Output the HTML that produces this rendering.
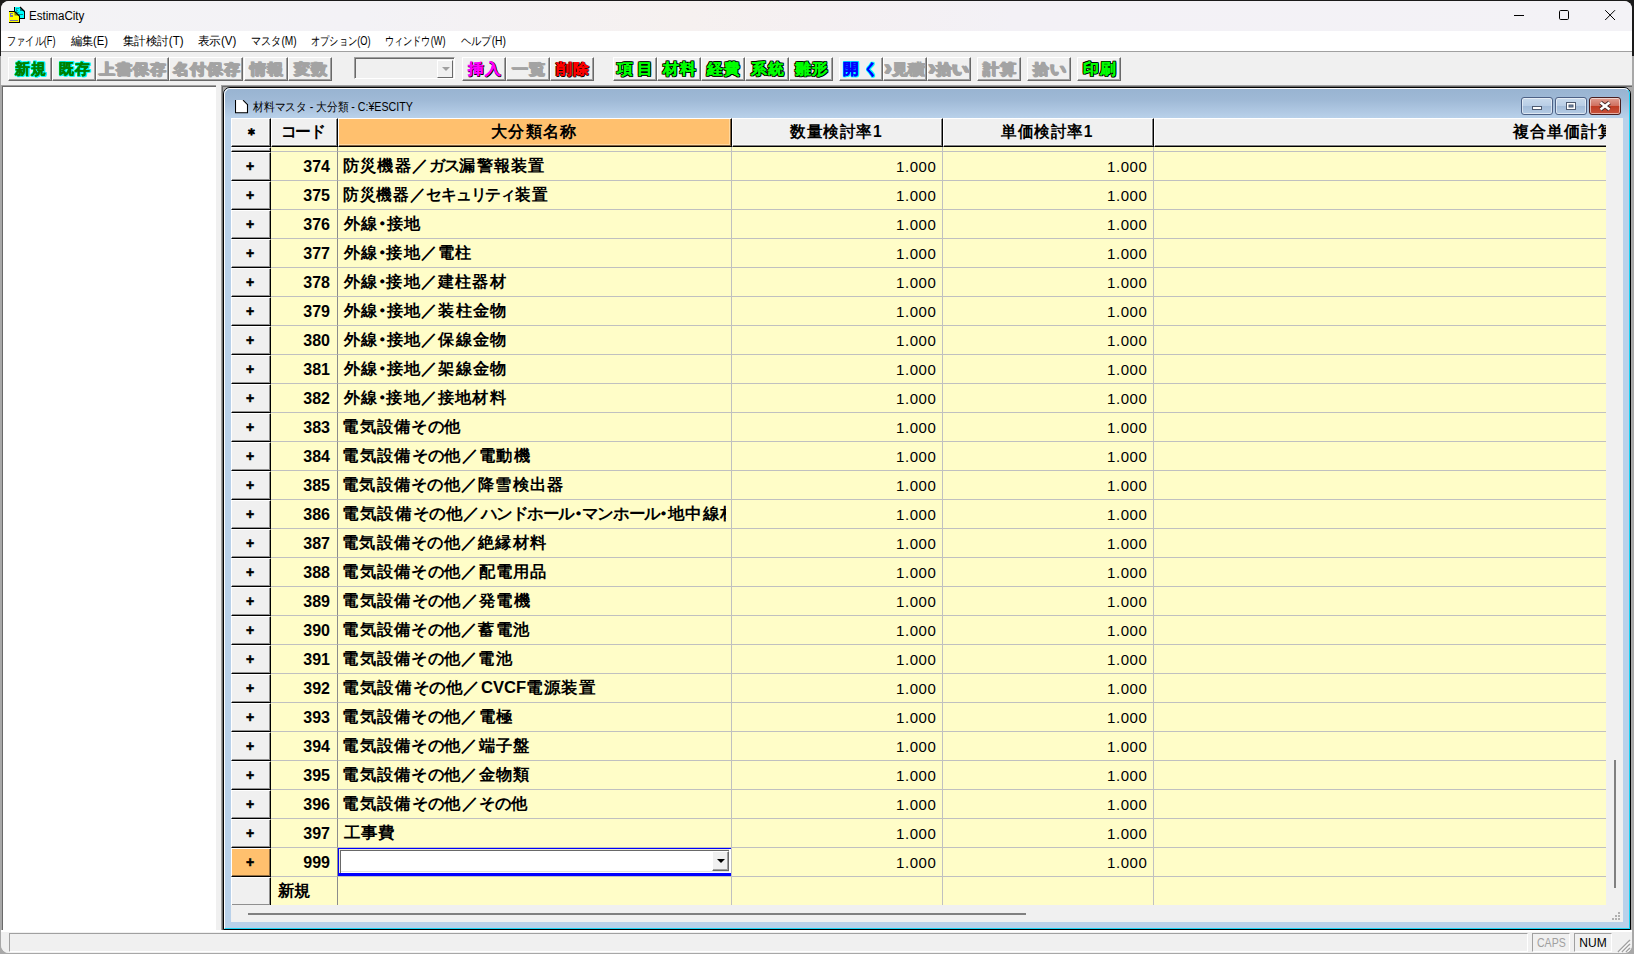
<!DOCTYPE html>
<html lang="ja">
<head>
<meta charset="utf-8">
<title>EstimaCity</title>
<style>
*{box-sizing:border-box;margin:0;padding:0}
html,body{width:1634px;height:954px;overflow:hidden}
body{position:relative;background:#a8a8a8;font-family:"Liberation Sans",sans-serif;color:#000}
.abs{position:absolute}
#edgeT{left:0;top:0;width:1634px;height:56px;background:#1a1a1a}
#win{left:1px;top:1px;width:1631px;height:952px;background:#f0f0f0;border-radius:8px;overflow:hidden}
#titlebar{left:0;top:0;width:1631px;height:30px;background:linear-gradient(90deg,#f3f3f5 0,#f3f2f6 22%,#f6f1f0 42%,#f5f0f2 50%,#f3f1f6 62%,#f3f2f6 100%)}
#apptitle{left:29px;top:7px;font-size:12px;line-height:16px;white-space:nowrap}
#menubar{left:0;top:30px;width:1631px;height:20px;background:#fff;font-size:12px;line-height:20px}
#menubar span{position:absolute;top:0;white-space:nowrap}
#tbline{left:0;top:50px;width:1631px;height:1px;background:#a0a0a0}
#toolbar{left:0;top:51px;width:1631px;height:33px;background:#f0f0f0}
.tb{position:absolute;top:5px;height:24px;width:44px;border:1px solid;border-color:#fff #696969 #696969 #fff;background:#f0f0f0;font-size:17px;line-height:22px;font-weight:bold;text-align:center;white-space:nowrap;overflow:hidden;box-shadow:inset -1px -1px 0 #a0a0a0}
.tb b{display:inline-block;font-weight:bold;font-size:15px;letter-spacing:1px;margin-right:-1px;transform:scaleX(1.05);transform-origin:50% 50%;position:relative;top:0}
.tb.w{width:74px}
.g1 b{transform:scaleX(1);color:#008000;-webkit-text-stroke:.4px #008000;text-shadow:-1px -1px 0 #00ffff,-1px 0px 0 #00ffff,-1px 1px 0 #00ffff,0px -1px 0 #00ffff,0px 1px 0 #00ffff,1px -1px 0 #00ffff,1px 0px 0 #00ffff,1px 1px 0 #00ffff}
.dis b{color:#a3a3a3;text-shadow:1px 0 0 #a3a3a3,0 1px 0 #a3a3a3,1px 1px 0 #a3a3a3,-1px 0 0 #a3a3a3}
.mg b{color:#ff00ff;-webkit-text-stroke:.3px #ff00ff;text-shadow:1px 1px 0 #000,1px 0 0 #000,0 1px 0 #000}
.rd b{color:#ff0000;-webkit-text-stroke:.3px #ff0000;text-shadow:1px 1px 0 #000,1px 0 0 #000,0 1px 0 #000,-1px 0 0 #000}
.gr b{color:#00ff00;-webkit-text-stroke:.3px #00ff00;text-shadow:-1px -1px 0 #000,-1px 0px 0 #000,-1px 1px 0 #000,0px -1px 0 #000,0px 1px 0 #000,1px -1px 0 #000,1px 0px 0 #000,1px 1px 0 #000}
.bl b{transform:scaleX(1.04);color:#0000ff;-webkit-text-stroke:.4px #0000ff;text-shadow:-1px -1px 0 #00ffff,-1px 0px 0 #00ffff,-1px 1px 0 #00ffff,0px -1px 0 #00ffff,0px 1px 0 #00ffff,1px -1px 0 #00ffff,1px 0px 0 #00ffff,1px 1px 0 #00ffff}
#tcombo{left:353px;top:5px;width:101px;height:22px;border:1px solid;border-color:#a0a0a0 #fff #fff #a0a0a0;background:#f0f0f0;box-shadow:inset 1px 1px 0 #696969}
#tcombo .dd{position:absolute;right:1px;top:2px;width:16px;height:18px;border:1px solid;border-color:#fff #696969 #696969 #fff;background:#f0f0f0}
#tcombo .dd i{position:absolute;left:4px;top:6px;border:4px solid transparent;border-top:4px solid #a0a0a0;border-bottom:none}
#leftpane{box-shadow:-1px 0 0 #a8a8a8;left:1px;top:84px;width:214px;height:845px;background:#fff;border-left:1px solid #696969;border-top:2px solid #696969}
#leftpane:before{content:"";position:absolute;left:-1px;top:-2px;width:214px;height:1px;background:#a0a0a0}
#mdi{left:220px;top:84px;width:1411px;height:845px;border-left:2px solid #696969;border-top:2px solid #696969;background:#ababab}
#mdi:before{content:"";position:absolute;left:-2px;top:-2px;width:1411px;height:1px;background:#a0a0a0}
#mdi:after{content:"";position:absolute;left:-2px;top:-2px;width:1px;height:845px;background:#a0a0a0}
#child{left:222px;top:86px;width:1408px;height:843px;border:1px solid #000;border-radius:7px 7px 0 0;background:#b9d1ea;overflow:hidden}
#child .hl{left:0;top:0;width:1406px;height:841px;border:1px solid;border-color:#fff #19d3f5 #19d3f5 #fff;border-radius:6px 6px 0 0}
#ctitle{left:0;top:0;width:1406px;height:30px;background:linear-gradient(#98b3d1,#9fb9d6 40%,#b9d1ea);border-radius:5px 5px 0 0}
#ctext{left:30px;top:11px;font-size:12px;line-height:16px;white-space:nowrap}
.cb{position:absolute;top:9px;width:32px;height:18px;border:1px solid #4d6185;border-radius:3px;background:linear-gradient(#c9daec,#b9cee6 48%,#a3bcd9 52%,#b4cbe4);box-shadow:inset 0 0 0 1px rgba(255,255,255,.55)}
.cb.x{border-color:#4a1d1d;background:linear-gradient(#e0a093,#d0705f 48%,#bf3b22 52%,#c8533d)}
#client{left:7px;top:30px;width:1392px;height:804px;background:#f0f0f0}
#grid{letter-spacing:1px;position:absolute;left:231px;top:118px;width:1375px;height:787px;background:#fffdc8;overflow:hidden;font-size:16px;font-weight:bold}
.h{position:absolute;top:0;height:29px;background:#f0f0f0;border-top:1px solid #fff;border-left:1px solid #fff;border-right:1px solid #000;border-bottom:1px solid #000;text-align:center;line-height:25px;white-space:nowrap;overflow:hidden;box-shadow:inset -1px -1px 0 #808080,inset -2px -2px 0 #f8f8f8}
.h.or{background:#ffc06e;box-shadow:inset -1px -1px 0 #80603a,inset -2px -2px 0 #ffd9a0}
.row{position:absolute;left:0;width:1375px;height:29px}
.rh{position:absolute;left:0;top:0;width:40px;height:29px;background:#f0f0f0;border-top:1px solid #fff;border-left:1px solid #fff;border-right:1px solid #000;border-bottom:1px solid #000;text-align:center;line-height:25px;box-shadow:inset -1px -1px 0 #909090}
.rh.sel{background:#ffc06e;box-shadow:inset -1px -1px 0 #906c40}
.rh span{-webkit-text-stroke:.5px #000;font-size:14px;position:relative;top:0;left:-0.500px}
.c{position:absolute;top:0;height:29px;border-right:1px solid #c0c0c0;border-bottom:1px solid #c0c0c0;line-height:28px;white-space:nowrap;overflow:hidden}
.code{border-right-color:#8c8c8c;left:40px;width:67px;text-align:right;padding-right:7px}
.newc{text-align:left;padding-left:6px;padding-right:0}
.name{left:107px;width:394px;padding-left:6px}
.qty{left:501px;width:211px;text-align:right;padding-right:5.500px;font-weight:normal}
.prc{left:712px;width:211px;text-align:right;padding-right:5.500px;font-weight:normal}
.last{left:923px;width:460px}
.edit{padding:0}
.ed{position:absolute;left:0;top:0;width:393px;height:28px;background:#fff;border-left:1px solid #0000ff;border-top:1px solid #0000ff;border-bottom:3px solid #0000ff}
.combo{position:absolute;left:0;top:0;width:390px;height:24px;background:#fff;box-shadow:inset 1px 1px 0 #ecead0,inset 2px 2px 0 #696969,inset 0 -1px 0 #fff,inset 0 -2px 0 #e3e3e3}
.combo .dd{position:absolute;left:373px;top:2px;width:17px;height:20px;border:1px solid;border-color:#fff #696969 #696969 #fff;background:#f0f0f0;box-shadow:inset -1px -1px 0 #a0a0a0}
.combo .dd i{position:absolute;left:4px;top:7px;width:0;height:0;border:4px solid transparent;border-top:4px solid #000;border-bottom:none}
#hsb{left:248px;top:913px;width:778px;height:2px;background:#808080}
#vsb{left:1614px;top:760px;width:2px;height:128px;background:#808080}
#status{left:1px;top:930px;width:1631px;height:23px;background:#f0f0f0;border-top:2px solid #fff;border-radius:0 0 8px 8px}
.sp{position:absolute;top:933px;height:19px;border:1px solid;border-color:#a0a0a0 #fff #fff #a0a0a0;font-size:12px;line-height:19px;text-align:center}
.t{display:inline-block;transform-origin:0 50%;white-space:nowrap}
.k{letter-spacing:-1px}
.hk{letter-spacing:0}
.la{letter-spacing:0}
.d{margin:0 -4px;letter-spacing:0}
.qty,.prc{letter-spacing:.6px;line-height:29px;font-size:15px}
.code{letter-spacing:0;line-height:30px;font-size:16px}
.newc{line-height:28px}
#menubar span{transform-origin:0 50%;display:inline-block}
#ctext{transform-origin:0 50%}
.clip{width:384px;height:28px;overflow:hidden;margin-left:-2px;padding-left:2px}
.d{-webkit-text-stroke:1px #000}
.ar{font-size:22px;line-height:0;margin:0 -1px 0 -2px;position:relative;top:1px}
</style>
</head>
<body>
<div class="abs" id="edgeT"></div>
<div class="abs" id="win">
<div class="abs" id="titlebar">
<svg class="abs" style="left:7px;top:5px" width="18" height="18" viewBox="8 6 18 18" shape-rendering="crispEdges"><path d="M15 7h5l4 4v7h-9z" fill="#00ffff"/><path d="M14 7h1v5h-1zM24 11h1v8h-1zM19 18h5v1h-5z" fill="#000"/><path d="M20 8v3h4z" fill="#008080" shape-rendering="auto"/><path d="M20 7l4.500 4.500" stroke="#000" stroke-width="1.300" shape-rendering="auto"/><path d="M16 8h3v1h-2v1h1v1h-1v1h2v1h-3z" fill="#109090" opacity=".8"/><path d="M19 14h4v1h-4z" fill="#108080"/><path d="M9 12h6l4 4v6h-10z" fill="#ffff00"/><path d="M9 11h6v1h-6zM19 16h1v7h-1zM9 22h10v1h-10z" fill="#000"/><path d="M14.500 12.500v3h4z" fill="#808000" shape-rendering="auto"/><path d="M14.500 11.500l5 4.500" stroke="#000" stroke-width="1.300" shape-rendering="auto"/><path d="M10 13h3v1h-2v1h2v1h-2v0h-1zM10 16h3v1h-3zM10 20h8v1h-8z" fill="#7474a4"/></svg>
<div class="abs" id="apptitle" style="transform:translateX(-2.00px) scaleX(0.9659)">EstimaCity</div>
<svg class="abs" style="left:1506px;top:4px" width="120" height="20" viewBox="0 0 120 20"><path d="M7 10.500h10M53.700 5.500h6.600a1.200 1.200 0 0 1 1.200 1.200v6.600a1.200 1.200 0 0 1-1.200 1.200h-6.600a1.200 1.200 0 0 1-1.200-1.200v-6.600a1.200 1.200 0 0 1 1.200-1.200zM98.200 5.200l9.800 9.800M108 5.200l-9.800 9.800" stroke="#000" stroke-width="1" fill="none"/></svg>
</div>
<div class="abs" id="menubar"><span style="left:7px;transform:translateX(-1.00px) scaleX(0.7651)">ファイル(F)</span><span style="left:69px;transform:translateX(0.50px) scaleX(0.9401)">編集(E)</span><span style="left:121px;transform:translateX(0.60px) scaleX(0.9637)">集計検討(T)</span><span style="left:197px;transform:translateX(-0.05px) scaleX(0.9607)">表示(V)</span><span style="left:250px;transform:translateX(-0.05px) scaleX(0.8470)">マスタ(M)</span><span style="left:310px;transform:translateX(-0.15px) scaleX(0.7719)">オプション(O)</span><span style="left:384px;transform:translateX(-0.30px) scaleX(0.7659)">ウィンドウ(W)</span><span style="left:459px;transform:translateX(0.85px) scaleX(0.8564)">ヘルプ(H)</span></div>
<div class="abs" id="tbline"></div>
<div class="abs" id="toolbar">
<div class="tb g1" style="left:7px"><b>新規</b></div>
<div class="tb g1" style="left:51px"><b>既存</b></div>
<div class="tb w dis" style="left:95px;width:73px"><b>上書保存</b></div>
<div class="tb w dis" style="left:168px"><b>名付保存</b></div>
<div class="tb dis" style="left:243px"><b>情報</b></div>
<div class="tb dis" style="left:287px"><b>変数</b></div>
<div class="abs" id="tcombo"><div class="dd"><i></i></div></div>
<div class="tb mg" style="left:461px"><b>挿入</b></div>
<div class="tb dis" style="left:505px"><b>一覧</b></div>
<div class="tb rd" style="left:549px"><b>削除</b></div>
<div class="tb gr" style="left:612px"><b>項<span style="margin-left:3px">目</span></b></div>
<div class="tb gr" style="left:656px"><b>材料</b></div>
<div class="tb gr" style="left:700px"><b>経費</b></div>
<div class="tb gr" style="left:744px"><b>系統</b></div>
<div class="tb gr" style="left:788px"><b>雛形</b></div>
<div class="tb bl" style="left:838px"><b>開<span style="margin-left:3px">く</span></b></div>
<div class="tb dis" style="left:882px"><b><span class="ar">›</span>見積</b></div>
<div class="tb dis" style="left:926px"><b><span class="ar">›</span>拾い</b></div>
<div class="tb dis" style="left:976px"><b>計算</b></div>
<div class="tb dis" style="left:1026px"><b>拾い</b></div>
<div class="tb gr" style="left:1076px"><b>印刷</b></div>
</div>
<div class="abs" id="leftpane"></div>
<div class="abs" id="mdi"></div>
<div class="abs" id="child">
<div class="abs" id="ctitle"></div>
<div class="abs hl"></div>
<svg class="abs" style="left:11px;top:12px" width="14" height="15" viewBox="235 100 14 15"><path d="M236 100h7l4 4v8.500h-11z" fill="#fff"/><path d="M235.500 100v13M235 112.700h13M247.500 104v9M243 100.200l4.500 4.500" stroke="#000" stroke-width="1.100" fill="none"/></svg>
<div class="abs" id="ctext" style="transform:translateX(-0.60px) scaleX(0.8895)">材料マスタ - 大分類 - C:¥ESCITY</div>
<div class="cb" style="left:1297px"><svg width="30" height="16" viewBox="0 0 30 16"><rect x="10.500" y="8.500" width="9" height="3" fill="#fff" stroke="#4d5a70" stroke-width="1"/></svg></div>
<div class="cb" style="left:1331px"><svg width="30" height="16" viewBox="0 0 30 16"><rect x="10.500" y="4.500" width="9" height="7" fill="#fff" stroke="#4d5a70" stroke-width="1"/><rect x="13" y="7" width="4" height="2" fill="#7c95b8" stroke="#4d5a70" stroke-width="1"/></svg></div>
<div class="cb x" style="left:1365px"><svg width="30" height="16" viewBox="0 0 30 16"><path d="M10.500 4.500l9 7M19.500 4.500l-9 7" stroke="#4a2a2a" stroke-width="4.200"/><path d="M10.500 4.500l9 7M19.500 4.500l-9 7" stroke="#fff" stroke-width="2.400"/></svg></div>
<div class="abs" id="client"></div>
</div>
</div>
<div id="grid">
<div class="h" style="left:0;width:40px;"><span style="font-size:15px;letter-spacing:0;-webkit-text-stroke:.3px #000;position:relative;top:2px">＊</span></div>
<div class="h" style="left:40px;width:67px"><span class="t" style="transform:translateX(-1.40px) scaleX(0.9859)"><span class="k">コード</span></span></div>
<div class="h or" style="left:107px;width:394px"><span class="t" style="transform:translateX(-1.70px) scaleX(1.0067)">大分類名称</span></div>
<div class="h" style="left:501px;width:211px"><span class="t" style="transform:translateX(-0.95px) scaleX(0.9761)">数量検討率<span class="la">1</span></span></div>
<div class="h" style="left:712px;width:211px"><span class="t" style="transform:translateX(-1.00px) scaleX(0.9744)">単価検討率<span class="la">1</span></span></div>
<div class="h" style="left:923px;width:460px;text-align:left;padding-left:358px"><span class="t">複合単価計算</span></div>
<div class="row" style="top:29px;height:5px"><div class="rh" style="height:5px"></div><div class="c code" style="height:5px"></div><div class="c name" style="height:5px"></div><div class="c qty" style="height:5px"></div><div class="c prc" style="height:5px"></div><div class="c last" style="height:5px"></div></div>
<div class="row" style="top:34px"><div class="rh"><span>+</span></div><div class="c code">374</div><div class="c name"><span class="t" style="transform:translateX(-1.00px) scaleX(1.0126)">防災機器／<span class="k">ガス</span>漏警報装置</span></div><div class="c qty">1.000</div><div class="c prc">1.000</div><div class="c last"></div></div>
<div class="row" style="top:63px"><div class="rh"><span>+</span></div><div class="c code">375</div><div class="c name"><span class="t" style="transform:translateX(-1.00px) scaleX(0.9820)">防災機器／<span class="k">セキュリティ</span>装置</span></div><div class="c qty">1.000</div><div class="c prc">1.000</div><div class="c last"></div></div>
<div class="row" style="top:92px"><div class="rh"><span>+</span></div><div class="c code">376</div><div class="c name"><span class="t" style="transform:translateX(0.00px) scaleX(1.0134)">外線<span class="d">・</span>接地</span></div><div class="c qty">1.000</div><div class="c prc">1.000</div><div class="c last"></div></div>
<div class="row" style="top:121px"><div class="rh"><span>+</span></div><div class="c code">377</div><div class="c name"><span class="t" style="transform:translateX(0.00px) scaleX(1.0116)">外線<span class="d">・</span>接地／電柱</span></div><div class="c qty">1.000</div><div class="c prc">1.000</div><div class="c last"></div></div>
<div class="row" style="top:150px"><div class="rh"><span>+</span></div><div class="c code">378</div><div class="c name"><span class="t" style="transform:translateX(0.00px) scaleX(1.0110)">外線<span class="d">・</span>接地／建柱器材</span></div><div class="c qty">1.000</div><div class="c prc">1.000</div><div class="c last"></div></div>
<div class="row" style="top:179px"><div class="rh"><span>+</span></div><div class="c code">379</div><div class="c name"><span class="t" style="transform:translateX(0.00px) scaleX(1.0157)">外線<span class="d">・</span>接地／装柱金物</span></div><div class="c qty">1.000</div><div class="c prc">1.000</div><div class="c last"></div></div>
<div class="row" style="top:208px"><div class="rh"><span>+</span></div><div class="c code">380</div><div class="c name"><span class="t" style="transform:translateX(0.00px) scaleX(1.0157)">外線<span class="d">・</span>接地／保線金物</span></div><div class="c qty">1.000</div><div class="c prc">1.000</div><div class="c last"></div></div>
<div class="row" style="top:237px"><div class="rh"><span>+</span></div><div class="c code">381</div><div class="c name"><span class="t" style="transform:translateX(0.00px) scaleX(1.0157)">外線<span class="d">・</span>接地／架線金物</span></div><div class="c qty">1.000</div><div class="c prc">1.000</div><div class="c last"></div></div>
<div class="row" style="top:266px"><div class="rh"><span>+</span></div><div class="c code">382</div><div class="c name"><span class="t" style="transform:translateX(0.00px) scaleX(1.0110)">外線<span class="d">・</span>接地／接地材料</span></div><div class="c qty">1.000</div><div class="c prc">1.000</div><div class="c last"></div></div>
<div class="row" style="top:295px"><div class="rh"><span>+</span></div><div class="c code">383</div><div class="c name"><span class="t" style="transform:translateX(-1.75px) scaleX(1.0183)">電気設備<span class="hk">その</span>他</span></div><div class="c qty">1.000</div><div class="c prc">1.000</div><div class="c last"></div></div>
<div class="row" style="top:324px"><div class="rh"><span>+</span></div><div class="c code">384</div><div class="c name"><span class="t" style="transform:translateX(-1.75px) scaleX(1.0194)">電気設備<span class="hk">その</span>他／電動機</span></div><div class="c qty">1.000</div><div class="c prc">1.000</div><div class="c last"></div></div>
<div class="row" style="top:353px"><div class="rh"><span>+</span></div><div class="c code">385</div><div class="c name"><span class="t" style="transform:translateX(-1.75px) scaleX(1.0143)">電気設備<span class="hk">その</span>他／降雪検出器</span></div><div class="c qty">1.000</div><div class="c prc">1.000</div><div class="c last"></div></div>
<div class="row" style="top:382px"><div class="rh"><span>+</span></div><div class="c code">386</div><div class="c name"><div class="clip"><span class="t" style="transform:translateX(-1.75px) scaleX(1.0334)">電気設備<span class="hk">その</span>他／<span class="k">ハンドホール</span><span class="d">・</span><span class="k">マンホール</span><span class="d">・</span>地中線材</span></div></div><div class="c qty">1.000</div><div class="c prc">1.000</div><div class="c last"></div></div>
<div class="row" style="top:411px"><div class="rh"><span>+</span></div><div class="c code">387</div><div class="c name"><span class="t" style="transform:translateX(-1.75px) scaleX(1.0138)">電気設備<span class="hk">その</span>他／絶縁材料</span></div><div class="c qty">1.000</div><div class="c prc">1.000</div><div class="c last"></div></div>
<div class="row" style="top:440px"><div class="rh"><span>+</span></div><div class="c code">388</div><div class="c name"><span class="t" style="transform:translateX(-1.75px) scaleX(1.0175)">電気設備<span class="hk">その</span>他／配電用品</span></div><div class="c qty">1.000</div><div class="c prc">1.000</div><div class="c last"></div></div>
<div class="row" style="top:469px"><div class="rh"><span>+</span></div><div class="c code">389</div><div class="c name"><span class="t" style="transform:translateX(-1.75px) scaleX(1.0194)">電気設備<span class="hk">その</span>他／発電機</span></div><div class="c qty">1.000</div><div class="c prc">1.000</div><div class="c last"></div></div>
<div class="row" style="top:498px"><div class="rh"><span>+</span></div><div class="c code">390</div><div class="c name"><span class="t" style="transform:translateX(-1.75px) scaleX(1.0153)">電気設備<span class="hk">その</span>他／蓄電池</span></div><div class="c qty">1.000</div><div class="c prc">1.000</div><div class="c last"></div></div>
<div class="row" style="top:527px"><div class="rh"><span>+</span></div><div class="c code">391</div><div class="c name"><span class="t" style="transform:translateX(-1.75px) scaleX(1.0157)">電気設備<span class="hk">その</span>他／電池</span></div><div class="c qty">1.000</div><div class="c prc">1.000</div><div class="c last"></div></div>
<div class="row" style="top:556px"><div class="rh"><span>+</span></div><div class="c code">392</div><div class="c name"><span class="t" style="transform:translateX(-1.75px) scaleX(1.0350)">電気設備<span class="hk">その</span>他／<span class="la">CVCF</span>電源装置</span></div><div class="c qty">1.000</div><div class="c prc">1.000</div><div class="c last"></div></div>
<div class="row" style="top:585px"><div class="rh"><span>+</span></div><div class="c code">393</div><div class="c name"><span class="t" style="transform:translateX(-1.75px) scaleX(1.0172)">電気設備<span class="hk">その</span>他／電極</span></div><div class="c qty">1.000</div><div class="c prc">1.000</div><div class="c last"></div></div>
<div class="row" style="top:614px"><div class="rh"><span>+</span></div><div class="c code">394</div><div class="c name"><span class="t" style="transform:translateX(-1.75px) scaleX(1.0181)">電気設備<span class="hk">その</span>他／端子盤</span></div><div class="c qty">1.000</div><div class="c prc">1.000</div><div class="c last"></div></div>
<div class="row" style="top:643px"><div class="rh"><span>+</span></div><div class="c code">395</div><div class="c name"><span class="t" style="transform:translateX(-1.75px) scaleX(1.0181)">電気設備<span class="hk">その</span>他／金物類</span></div><div class="c qty">1.000</div><div class="c prc">1.000</div><div class="c last"></div></div>
<div class="row" style="top:672px"><div class="rh"><span>+</span></div><div class="c code">396</div><div class="c name"><span class="t" style="transform:translateX(-1.75px) scaleX(1.0194)">電気設備<span class="hk">その</span>他／<span class="hk">その</span>他</span></div><div class="c qty">1.000</div><div class="c prc">1.000</div><div class="c last"></div></div>
<div class="row" style="top:701px"><div class="rh"><span>+</span></div><div class="c code">397</div><div class="c name"><span class="t" style="transform:translateX(-0.50px) scaleX(1.0285)">工事費</span></div><div class="c qty">1.000</div><div class="c prc">1.000</div><div class="c last"></div></div>
<div class="row" style="top:730px"><div class="rh sel"><span>+</span></div><div class="c code">999</div><div class="c name edit"><div class="ed"><div class="combo"><div class="dd"><i></i></div></div></div></div><div class="c qty">1.000</div><div class="c prc">1.000</div><div class="c last"></div></div>
<div class="row new" style="top:759px"><div class="rh"></div><div class="c code newc"><span class="t" style="transform:translateX(0.75px) scaleX(1.0244)">新規</span></div><div class="c name"></div><div class="c qty"></div><div class="c prc"></div><div class="c last"></div></div>
</div>
<div class="abs" id="hsb"></div>
<div class="abs" id="vsb"></div>
<svg class="abs" style="left:1611px;top:911px" width="10" height="10" viewBox="0 0 10 10"><path d="M7 1h2v2h-2zM4 4h2v2h-2zM7 4h2v2h-2zM1 7h2v2h-2zM4 7h2v2h-2zM7 7h2v2h-2z" fill="#b0b0b0"/></svg>
<div class="abs" id="status"></div>
<div class="sp" style="left:9px;width:1519px"></div>
<div class="sp" style="left:1532px;width:38px;color:#a0a0a0"><span style="display:inline-block;transform:scaleX(.88)">CAPS</span></div>
<div class="sp" style="left:1574px;width:38px">NUM</div>
<svg class="abs" style="left:1617px;top:939px" width="14" height="14" viewBox="0 0 14 14"><path d="M13 1L1 13M13 5L5 13M13 9L9 13" stroke="#a0a0a0" stroke-width="1.500"/><path d="M13 2.500L2.500 13M13 6.500L6.500 13M13 10.500L10.500 13" stroke="#fff" stroke-width="1"/></svg>
</body>
</html>
